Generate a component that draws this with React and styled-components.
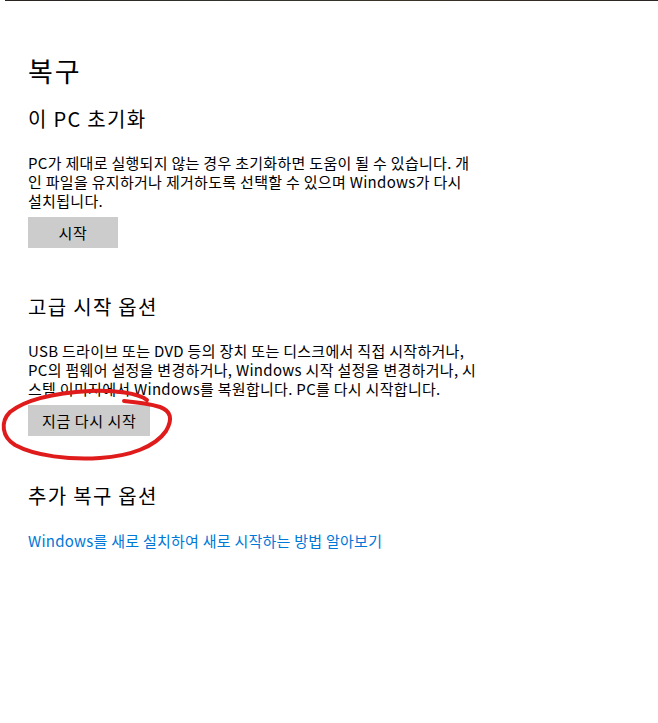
import React from "react";
import styled, { createGlobalStyle } from "styled-components";

const GlobalStyle = createGlobalStyle`
  body {
    margin: 0;
    background: #ffffff;
    color: #000000;
    font-family: "Noto Sans CJK KR", "Noto Sans", sans-serif;
  }
`;

const TopRule = styled.div`
  height: 1px;
  margin-left: 5px;
  background: linear-gradient(90deg, #2a2320, #33352e 40%, #3a3326 60%, #2b2623);
`;

const Page = styled.main`
  padding: 0 28px 60px;
`;

const Title = styled.h1`
  margin: 52px 0 0;
  font-size: 27px;
  line-height: 36px;
  font-weight: 400;
  letter-spacing: 2px;
`;

const Heading = styled.h2`
  margin: ${(p) => p.$top}px 0 0;
  font-size: 20px;
  line-height: 28px;
  font-weight: 400;
  letter-spacing: 1.3px;
`;

const Text = styled.p`
  margin: 20px 0 0;
  max-width: 540px;
  font-size: 15px;
  line-height: 19px;
  letter-spacing: 0.3px;
`;

const ButtonWrap = styled.div`
  position: relative;
  display: inline-block;
  margin-top: 7px;
`;

const Button = styled.button`
  display: flex;
  align-items: center;
  justify-content: center;
  min-width: 90px;
  height: 31px;
  padding: 0 14px;
  border: none;
  background: #cccccc;
  color: #000000;
  font-family: inherit;
  font-size: 15px;
  letter-spacing: 0.6px;
  cursor: pointer;
`;

const Scribble = styled.svg`
  position: absolute;
  left: -28px;
  top: -22px;
  width: 175px;
  height: 82px;
  pointer-events: none;
  overflow: visible;
`;

const Link = styled.a`
  display: block;
  margin-top: 21px;
  font-size: 15px;
  line-height: 19px;
  letter-spacing: 0.25px;
  color: #0078d7;
  text-decoration: none;
`;

export default function App() {
  return (
    <>
      <GlobalStyle />
      <TopRule />
      <Page>
        <Title>복구</Title>

        <Heading $top={16}>이 PC 초기화</Heading>
        <Text>
          PC가 제대로 실행되지 않는 경우 초기화하면 도움이 될 수 있습니다. 개
          <br />
          인 파일을 유지하거나 제거하도록 선택할 수 있으며 Windows가 다시
          <br />
          설치됩니다.
        </Text>
        <ButtonWrap>
          <Button>시작</Button>
        </ButtonWrap>

        <Heading $top={45}>고급 시작 옵션</Heading>
        <Text>
          USB 드라이브 또는 DVD 등의 장치 또는 디스크에서 직접 시작하거나,
          <br />
          PC의 펌웨어 설정을 변경하거나, Windows 시작 설정을 변경하거나, 시
          <br />
          스템 이미지에서 Windows를 복원합니다. PC를 다시 시작합니다.
        </Text>
        <ButtonWrap>
          <Button>지금 다시 시작</Button>
          <Scribble viewBox="0 384 175 82">
            <path
              d="M147,401 C138,394 115,391 90,392 C55,394 25,401 10,413 C0,423 2,438 15,446 C35,457 70,461 100,459 C130,457 155,448 166,432 C173,420 171,412 160,408 C150,405 135,403 124,402"
              fill="none"
              stroke="#e01b1b"
              strokeWidth="4"
              strokeLinecap="round"
              strokeLinejoin="round"
            />
          </Scribble>
        </ButtonWrap>

        <Heading $top={46}>추가 복구 옵션</Heading>
        <Link href="#">Windows를 새로 설치하여 새로 시작하는 방법 알아보기</Link>
      </Page>
    </>
  );
}
